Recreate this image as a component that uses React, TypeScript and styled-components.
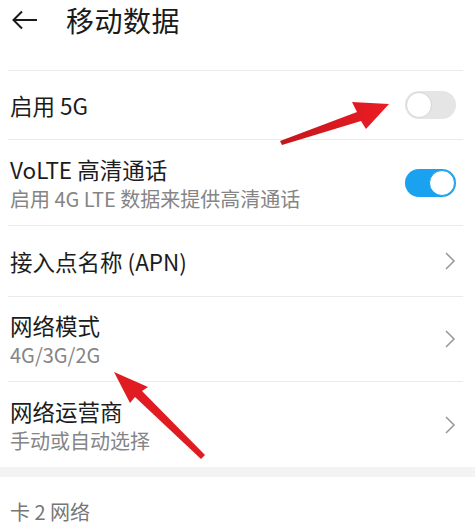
import React from 'react';
import styled, { createGlobalStyle } from 'styled-components';

const GlobalStyle = createGlobalStyle`
  html, body {
    margin: 0;
    padding: 0;
    background: #ffffff;
  }
  body {
    font-family: "Noto Sans CJK SC", "Noto Sans", sans-serif;
    color: #1c1c1c;
  }
`;

const Page = styled.div`
  position: relative;
  width: 475px;
  height: 527px;
  overflow: hidden;
  background: #fff;
`;

const Header = styled.div`
  display: flex;
  align-items: center;
  height: 40px;
  padding: 0 0 30px 12px;
  gap: 28px;
`;

const Title = styled.h1`
  margin: 0;
  font-size: 28px;
  font-weight: 400;
  line-height: 40px;
  letter-spacing: 0.5px;
  color: #1a1a1a;
`;

const List = styled.div`
  display: flex;
  flex-direction: column;
  margin: 0 12px 0 8px;
`;

const Row = styled.div<{ $h: number }>`
  display: flex;
  align-items: center;
  justify-content: space-between;
  height: ${(p) => p.$h}px;
  padding: 0 7px 0 2px;
  border-top: 1.5px solid #ebebeb;
  box-sizing: border-box;
`;

const Texts = styled.div`
  display: flex;
  flex-direction: column;
  gap: 6px;
`;

const Label = styled.div`
  font-size: 22.5px;
  line-height: 26px;
  color: #1c1c1c;
`;

const Sub = styled.div`
  font-size: 20px;
  line-height: 22px;
  color: #858585;
`;

const Toggle = styled.div<{ $on?: boolean }>`
  width: 51px;
  height: 28px;
  border-radius: 14px;
  background: ${(p) => (p.$on ? '#1aa1f0' : '#e5e5e5')};
  display: flex;
  align-items: center;
  justify-content: ${(p) => (p.$on ? 'flex-end' : 'flex-start')};
  padding: 0 1px;
  box-sizing: border-box;
`;

const Knob = styled.div<{ $on?: boolean }>`
  width: 26px;
  height: 26px;
  border-radius: 50%;
  background: #fff;
  box-sizing: border-box;
  border: 1.5px solid ${(p) => (p.$on ? '#1aa1f0' : '#d6d6d6')};
`;

const Band = styled.div`
  height: 10px;
  background: #f3f3f3;
`;

const Section = styled.div`
  padding: 23px 10px 0;
  font-size: 20px;
  line-height: 24px;
  color: #767676;
`;

const Overlay = styled.svg`
  position: absolute;
  left: 0;
  top: 0;
  pointer-events: none;
`;

const Chevron = () => (
  <svg width="12" height="20" viewBox="0 0 12 20">
    <path d="M2 2 L10 10 L2 18" fill="none" stroke="#9a9a9a" strokeWidth="1.6" />
  </svg>
);

const App = () => {
  return (
    <Page>
      <GlobalStyle />
      <Header>
        <svg width="26" height="20" viewBox="0 0 26 20">
          <path d="M25 10 H2 M10 1.5 L1.5 10 L10 18.5" fill="none" stroke="#1a1a1a" strokeWidth="2" />
        </svg>
        <Title>移动数据</Title>
      </Header>
      <List>
        <Row $h={69}>
          <Label>启用 5G</Label>
          <Toggle>
            <Knob />
          </Toggle>
        </Row>
        <Row $h={86}>
          <Texts>
            <Label>VoLTE 高清通话</Label>
            <Sub>启用 4G LTE 数据来提供高清通话</Sub>
          </Texts>
          <Toggle $on>
            <Knob $on />
          </Toggle>
        </Row>
        <Row $h={71}>
          <Label>接入点名称 (APN)</Label>
          <Chevron />
        </Row>
        <Row $h={85}>
          <Texts>
            <Label>网络模式</Label>
            <Sub>4G/3G/2G</Sub>
          </Texts>
          <Chevron />
        </Row>
        <Row $h={86}>
          <Texts>
            <Label>网络运营商</Label>
            <Sub>手动或自动选择</Sub>
          </Texts>
          <Chevron />
        </Row>
      </List>
      <Band />
      <Section>卡 2 网络</Section>
      <Overlay width="475" height="527" viewBox="0 0 475 527">
        <defs>
          <linearGradient id="red" x1="0" y1="0" x2="1" y2="0">
            <stop offset="0" stopColor="#c4161c" />
            <stop offset="1" stopColor="#ec1c24" />
          </linearGradient>
        </defs>
        <polygon points="280,141 357,112 352,102 389,104 366,129 361,121 282,145" fill="url(#red)" />
        <polygon points="201,459 135,397 130,403 114,372 148,387 142,391 205,455" fill="#e01b22" />
      </Overlay>
    </Page>
  );
};

export default App;
